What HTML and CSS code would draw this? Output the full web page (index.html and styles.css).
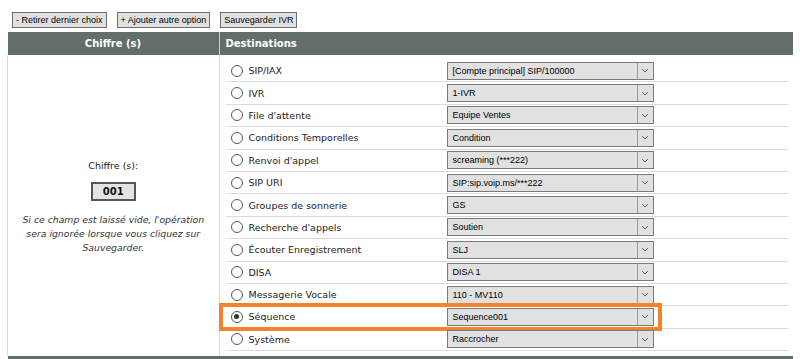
FILE: index.html
```html
<!DOCTYPE html>
<html lang="fr">
<head>
    <meta charset="UTF-8">
    <title>IVR</title>
    <link rel="stylesheet" href="styles.css">
</head>
<body>
    <div class="toolbar">
        <button class="btn">- Retirer dernier choix</button>
        <button class="btn">+ Ajouter autre option</button>
        <button class="btn">Sauvegarder IVR</button>
    </div>
    <table class="ivr-table">
        <thead>
            <tr>
                <th class="col-digit">Chiffre (s)</th>
                <th class="col-dest">Destinations</th>
            </tr>
        </thead>
        <tbody>
            <tr>
                <td class="digit-cell">
                    <div class="digit-label">Chiffre (s):</div>
                    <div class="digit-box">001</div>
                    <p class="digit-note">Si ce champ est laissé vide, l'opération sera ignorée lorsque vous cliquez sur Sauvegarder.</p>
                </td>
                <td class="dest-cell">
                    <div class="dest-list">
                        <div class="dest-row"><span class="radio"></span><span class="dest-name">SIP/IAX</span><div class="select"><span>[Compte principal] SIP/100000</span><span class="arrow"><svg width="8" height="5" viewBox="0 0 8 5"><path d="M1 1l3 3 3-3" fill="none" stroke="#666" stroke-width="1"/></svg></span></div></div>
                        <div class="dest-row"><span class="radio"></span><span class="dest-name">IVR</span><div class="select"><span>1-IVR</span><span class="arrow"><svg width="8" height="5" viewBox="0 0 8 5"><path d="M1 1l3 3 3-3" fill="none" stroke="#666" stroke-width="1"/></svg></span></div></div>
                        <div class="dest-row"><span class="radio"></span><span class="dest-name">File d'attente</span><div class="select"><span>Equipe Ventes</span><span class="arrow"><svg width="8" height="5" viewBox="0 0 8 5"><path d="M1 1l3 3 3-3" fill="none" stroke="#666" stroke-width="1"/></svg></span></div></div>
                        <div class="dest-row"><span class="radio"></span><span class="dest-name">Conditions Temporelles</span><div class="select"><span>Condition</span><span class="arrow"><svg width="8" height="5" viewBox="0 0 8 5"><path d="M1 1l3 3 3-3" fill="none" stroke="#666" stroke-width="1"/></svg></span></div></div>
                        <div class="dest-row"><span class="radio"></span><span class="dest-name">Renvoi d'appel</span><div class="select"><span>screaming (***222)</span><span class="arrow"><svg width="8" height="5" viewBox="0 0 8 5"><path d="M1 1l3 3 3-3" fill="none" stroke="#666" stroke-width="1"/></svg></span></div></div>
                        <div class="dest-row"><span class="radio"></span><span class="dest-name">SIP URI</span><div class="select"><span>SIP:sip.voip.ms/***222</span><span class="arrow"><svg width="8" height="5" viewBox="0 0 8 5"><path d="M1 1l3 3 3-3" fill="none" stroke="#666" stroke-width="1"/></svg></span></div></div>
                        <div class="dest-row"><span class="radio"></span><span class="dest-name">Groupes de sonnerie</span><div class="select"><span>GS</span><span class="arrow"><svg width="8" height="5" viewBox="0 0 8 5"><path d="M1 1l3 3 3-3" fill="none" stroke="#666" stroke-width="1"/></svg></span></div></div>
                        <div class="dest-row"><span class="radio"></span><span class="dest-name">Recherche d'appels</span><div class="select"><span>Soutien</span><span class="arrow"><svg width="8" height="5" viewBox="0 0 8 5"><path d="M1 1l3 3 3-3" fill="none" stroke="#666" stroke-width="1"/></svg></span></div></div>
                        <div class="dest-row"><span class="radio"></span><span class="dest-name">Écouter Enregistrement</span><div class="select"><span>SLJ</span><span class="arrow"><svg width="8" height="5" viewBox="0 0 8 5"><path d="M1 1l3 3 3-3" fill="none" stroke="#666" stroke-width="1"/></svg></span></div></div>
                        <div class="dest-row"><span class="radio"></span><span class="dest-name">DISA</span><div class="select"><span>DISA 1</span><span class="arrow"><svg width="8" height="5" viewBox="0 0 8 5"><path d="M1 1l3 3 3-3" fill="none" stroke="#666" stroke-width="1"/></svg></span></div></div>
                        <div class="dest-row"><span class="radio"></span><span class="dest-name">Messagerie Vocale</span><div class="select"><span>110 - MV110</span><span class="arrow"><svg width="8" height="5" viewBox="0 0 8 5"><path d="M1 1l3 3 3-3" fill="none" stroke="#666" stroke-width="1"/></svg></span></div></div>
                        <div class="dest-row highlighted"><span class="radio checked"></span><span class="dest-name">Séquence</span><div class="select"><span>Sequence001</span><span class="arrow"><svg width="8" height="5" viewBox="0 0 8 5"><path d="M1 1l3 3 3-3" fill="none" stroke="#666" stroke-width="1"/></svg></span></div></div>
                        <div class="dest-row"><span class="radio"></span><span class="dest-name">Système</span><div class="select"><span>Raccrocher</span><span class="arrow"><svg width="8" height="5" viewBox="0 0 8 5"><path d="M1 1l3 3 3-3" fill="none" stroke="#666" stroke-width="1"/></svg></span></div></div>
                    </div>
                </td>
            </tr>
        </tbody>
        <tfoot>
            <tr><td colspan="2" class="footer-bar"></td></tr>
        </tfoot>
    </table>
</body>
</html>
```

FILE: styles.css
```css
body {
    margin: 0;
    padding: 12px 7px 0 7px;
    background: #fff;
    font-family: "DejaVu Sans", Verdana, sans-serif;
    color: #222;
}
.toolbar {
    display: flex;
    gap: 10px;
    padding-left: 5px;
    margin-bottom: 4px;
}
.btn {
    height: 16px;
    padding: 0 3px;
    font-family: "Liberation Sans", Arial, sans-serif;
    font-size: 9px;
    color: #000;
    background: #e1e1e1;
    border: 1px solid #6f6f6f;
    border-radius: 0;
}
.ivr-table {
    width: 786px;
    border-collapse: collapse;
    table-layout: fixed;
}
.ivr-table th {
    height: 23px;
    padding: 0;
    background: #636d6a;
    color: #fff;
    font-size: 10px;
    font-weight: bold;
}
.col-digit {
    width: 211px;
    text-align: center;
    border-right: 1px solid #c9cccb;
}
.col-dest {
    text-align: left;
    padding-left: 6px !important;
}
.digit-cell {
    vertical-align: middle;
    text-align: center;
    border-left: 1px solid #dcdcdc;
    border-right: 1px solid #dcdcdc;
    padding: 4px 8px 0;
    font-size: 9.5px;
}
.digit-label {
    margin-bottom: 11px;
}
.digit-box {
    display: inline-block;
    width: 41px;
    height: 15px;
    line-height: 15px;
    border: 2px solid #555;
    background: #e3e3e3;
    font-weight: bold;
    font-size: 10px;
    color: #111;
}
.digit-note {
    margin: 12px 0 0;
    font-style: italic;
    font-size: 9.3px;
    line-height: 14px;
    color: #333;
}
.dest-cell {
    padding: 5px 5px 5px 6px;
    vertical-align: top;
}
.dest-row {
    position: relative;
    display: flex;
    align-items: center;
    height: 22.4px;
    box-sizing: border-box;
    border-bottom: 1px solid #dadada;
    font-size: 9.5px;
}
.radio {
    width: 10px;
    height: 10px;
    margin: 0 6px 0 5px;
    border: 1px solid #555;
    border-radius: 50%;
    background: #fff;
    box-sizing: content-box;
    flex-shrink: 0;
    position: relative;
}
.radio.checked::after {
    content: "";
    position: absolute;
    left: 2.5px;
    top: 2.5px;
    width: 5px;
    height: 5px;
    border-radius: 50%;
    background: #333;
}
.dest-name {
    width: 198px;
}
.select {
    display: flex;
    align-items: stretch;
    width: 207px;
    height: 18px;
    box-sizing: border-box;
    border: 1px solid #7a7a7a;
    background: #e1e1e1;
    font-family: "Liberation Sans", Arial, sans-serif;
    font-size: 9px;
    color: #000;
}
.select span:first-child {
    flex: 1;
    padding-left: 5px;
    line-height: 16px;
}
.arrow {
    width: 15px;
    border-left: 1px solid #9a9a9a;
    display: flex;
    align-items: center;
    justify-content: center;
}
.highlighted::before {
    content: "";
    position: absolute;
    left: -7px;
    top: -3px;
    width: 443px;
    height: 28px;
    box-sizing: border-box;
    border: 4px solid #f5832b;
}
.footer-bar {
    height: 6px;
    padding: 0;
    background: #636d6a;
}
```
